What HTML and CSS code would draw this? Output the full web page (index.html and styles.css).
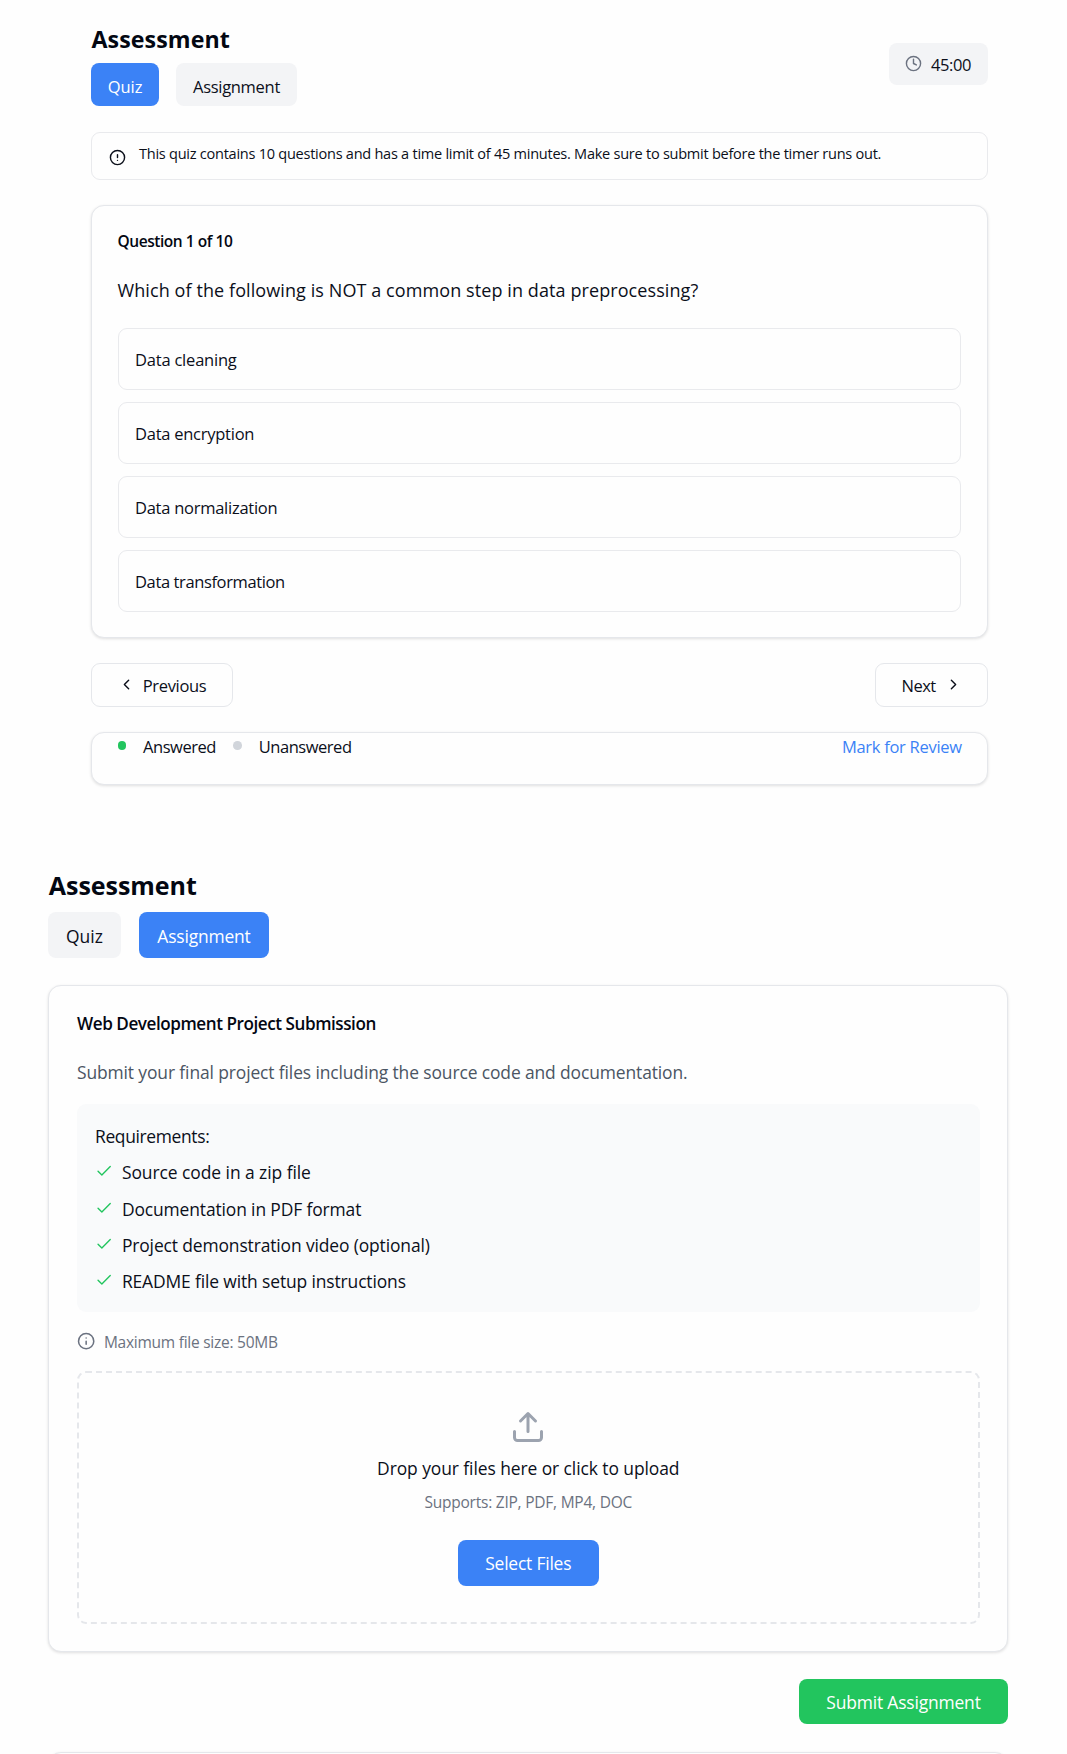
FILE: index.html
```html
<!DOCTYPE html>
<html lang="en">
<head>
<meta charset="utf-8">
<title>Assessment</title>
<link rel="stylesheet" href="styles.css">
</head>
<body>
<section class="quiz">
  <header class="quiz-header">
    <div>
      <h1 class="quiz-heading">Assessment</h1>
      <nav class="tabs">
        <button class="tab tab-quiz active">Quiz</button>
        <button class="tab tab-assignment">Assignment</button>
      </nav>
    </div>
    <div class="timer">
      <svg class="icon" viewBox="0 0 24 24"><circle cx="12" cy="12" r="10"/><path d="M12 6v6l4 2"/></svg>
      <span>45:00</span>
    </div>
  </header>

  <div class="alert">
    <svg class="icon" viewBox="0 0 24 24"><circle cx="12" cy="12" r="10"/><path d="M12 8v4M12 16h.01"/></svg>
    <p class="alert-text">This quiz contains 10 questions and has a time limit of 45 minutes. Make sure to submit before the timer runs out.</p>
  </div>

  <div class="card question-card">
    <h2 class="question-count">Question 1 of 10</h2>
    <p class="question">Which of the following is NOT a common step in data preprocessing?</p>
    <div class="options">
      <div class="option">Data cleaning</div>
      <div class="option">Data encryption</div>
      <div class="option">Data normalization</div>
      <div class="option">Data transformation</div>
    </div>
  </div>

  <div class="pager">
    <button class="pager-button previous">
      <svg class="icon" viewBox="0 0 24 24"><path d="m15 18-6-6 6-6"/></svg>
      <span>Previous</span>
    </button>
    <button class="pager-button next">
      <span>Next</span>
      <svg class="icon" viewBox="0 0 24 24"><path d="m9 18 6-6-6-6"/></svg>
    </button>
  </div>

  <div class="card status">
    <span class="dot answered"></span>
    <span class="status-label">Answered</span>
    <span class="dot"></span>
    <span class="status-label">Unanswered</span>
    <a class="review">Mark for Review</a>
  </div>
</section>

<section class="assignment">
  <h1 class="assignment-heading">Assessment</h1>
  <nav class="tabs">
    <button class="tab tab-quiz">Quiz</button>
    <button class="tab tab-assignment active">Assignment</button>
  </nav>

  <div class="card submission">
    <h2 class="submission-title">Web Development Project Submission</h2>
    <p class="description">Submit your final project files including the source code and documentation.</p>
    <div class="requirements">
      <p class="requirements-title">Requirements:</p>
      <ul class="requirement-list">
        <li><svg class="icon" viewBox="0 0 24 24"><path d="M20 6 9 17l-5-5"/></svg><span class="source">Source code in a zip file</span></li>
        <li><svg class="icon" viewBox="0 0 24 24"><path d="M20 6 9 17l-5-5"/></svg><span>Documentation in PDF format</span></li>
        <li><svg class="icon" viewBox="0 0 24 24"><path d="M20 6 9 17l-5-5"/></svg><span>Project demonstration video (optional)</span></li>
        <li><svg class="icon" viewBox="0 0 24 24"><path d="M20 6 9 17l-5-5"/></svg><span>README file with setup instructions</span></li>
      </ul>
    </div>
    <div class="size-note">
      <svg class="icon" viewBox="0 0 24 24"><circle cx="12" cy="12" r="10"/><path d="M12 16v-4M12 8h.01"/></svg>
      <span>Maximum file size: 50MB</span>
    </div>
    <div class="dropzone">
      <svg class="icon upload" viewBox="0 0 24 24"><path d="M21 15v4a2 2 0 0 1-2 2H5a2 2 0 0 1-2-2v-4M17 8l-5-5-5 5M12 3v12"/></svg>
      <p class="drop-text">Drop your files here or click to upload</p>
      <p class="supports">Supports: ZIP, PDF, MP4, DOC</p>
      <button class="select">Select Files</button>
    </div>
  </div>

  <div class="actions"><button class="submit">Submit Assignment</button></div>
  <div class="card following"></div>
</section>
</body>
</html>
```
FILE: styles.css
```css
* { box-sizing: border-box; margin: 0; padding: 0; }
html { overflow: hidden; }
body {
  height: 1754px;
  overflow: hidden;
  background: #fefefe;
  color: #0b0f1a;
  font-family: "Open Sans", "Noto Sans", sans-serif;
}
button { font: inherit; letter-spacing: inherit; color: inherit; border: 0; background: none; white-space: nowrap; }
p, span, a, h1, h2 { white-space: nowrap; }
ul { list-style: none; }
h1, h2 { color: #030712; }
.icon {
  flex: none;
  fill: none;
  stroke: currentColor;
  stroke-width: 2;
  stroke-linecap: round;
  stroke-linejoin: round;
}
.card {
  background: #fefefe;
  border: 1px solid #e5e7eb;
  border-radius: 13px;
  box-shadow: 0 1px 3px rgba(0, 0, 0, .12);
}
.tabs { display: flex; }
.tab { background: #f3f4f6; border-radius: 8px; padding-top: 3px; text-align: center; }
.tab.active { background: #3b82f6; color: #fff; }

/* Quiz */
.quiz {
  width: 896.5px;
  margin-left: 91px;
  padding-top: 23px;
  font-size: 16.5px;
  letter-spacing: -.3px;
  line-height: 24px;
}
.quiz .icon { width: 17px; height: 17px; }
.quiz-header { display: flex; justify-content: space-between; align-items: flex-start; }
.quiz-heading { padding-left: .5px; font-size: 23.2px; line-height: 32px; letter-spacing: .09px; font-weight: 700; }
.quiz .tabs { margin-top: 8.4px; gap: 17px; }
.quiz .tab { height: 43px; padding-top: 4px; }
.quiz .tab-quiz { width: 68px; letter-spacing: -.03px; }
.quiz .tab-assignment { width: 121px; }
.timer {
  display: flex;
  align-items: center;
  gap: 9px;
  width: 98.5px;
  height: 42px;
  margin-top: 20px;
  padding-left: 16px;
  background: #f3f4f6;
  border-radius: 8px;
  letter-spacing: -.4px;
}
.timer .icon { color: #6b7280; position: relative; top: -.8px; }
.timer span { padding-top: 1px; }
.alert {
  display: flex;
  height: 48px;
  margin-top: 25.6px;
  padding: 10px 17px;
  border: 1px solid #e9eaed;
  border-radius: 9px;
}
.alert .icon { margin-top: 6.4px; }
.alert-text { margin-left: 13px; font-size: 14.55px; line-height: 20px; letter-spacing: -.262px; }
.question-card { height: 432.7px; margin-top: 25px; padding: 23px 25.5px 0 25.5px; }
.question-count { font-size: 15.5px; line-height: 24px; font-weight: 600; letter-spacing: -.45px; }
.question { margin-top: 23px; font-size: 18px; line-height: 28px; letter-spacing: .09px; }
.options { display: grid; gap: 12.1px; margin-top: 24.5px; }
.option {
  display: flex;
  align-items: center;
  height: 61.8px;
  padding: 1.6px 0 0 16.5px;
  border: 1px solid #e9eaed;
  border-radius: 9px;
}
.option:nth-child(1) { letter-spacing: -.21px; }
.option:nth-child(2) { letter-spacing: -.25px; }
.option:nth-child(3) { letter-spacing: -.26px; }
.option:nth-child(4) { letter-spacing: -.38px; }
.pager { display: flex; justify-content: space-between; margin-top: 25.3px; }
.pager-button {
  display: flex;
  align-items: center;
  height: 43.7px;
  border: 1px solid #e5e7eb;
  border-radius: 9px;
}
.pager-button span { padding-top: 1.6px; }
.pager-button .icon { position: relative; top: -.5px; }
.previous { width: 142px; padding-left: 25.8px; gap: 8px; letter-spacing: -.35px; }
.next { width: 112.7px; padding-left: 25.8px; gap: 9px; letter-spacing: -.53px; }
.status { display: flex; height: 53px; margin-top: 25.3px; padding: 1.8px 24.7px 0 25.8px; }
.dot { width: 8.6px; height: 8.6px; margin-top: 6.5px; border-radius: 50%; background: #d1d5db; }
.dot.answered { background: #22c55e; }
.status-label { margin: 0 17.6px 0 16.7px; letter-spacing: -.47px; }
.review { margin-left: auto; color: #3b82f6; letter-spacing: -.28px; }

/* Assignment */
.assignment {
  width: 960px;
  margin: 82.2px 0 0 48px;
  font-size: 17.46px;
  line-height: 27px;
  letter-spacing: -.13px;
}
.assignment .icon { width: 18.3px; height: 18.3px; }
.assignment-heading { padding-left: .8px; font-size: 25px; line-height: 36px; letter-spacing: -.04px; font-weight: 700; }
.assignment .tabs { margin-top: 8.8px; gap: 18px; }
.assignment .tab { height: 45.7px; }
.assignment .tab-quiz { width: 73px; letter-spacing: .1px; }
.assignment .tab-assignment { width: 130px; letter-spacing: -.18px; }
.submission { height: 667px; margin-top: 27.3px; padding: 24px 27.5px 0 28px; }
.submission-title { font-size: 17.1px; line-height: 27px; font-weight: 600; letter-spacing: -.44px; }
.description { margin-top: 21.7px; color: #4b5563; letter-spacing: -.12px; }
.requirements {
  height: 207.7px;
  margin-top: 18.3px;
  padding: 19.2px 18px 0;
  border-radius: 9px;
  background: #f9fafb;
}
.requirements-title { letter-spacing: -.35px; }
.requirement-list { display: grid; gap: 9.3px; margin-top: 9.2px; }
.requirement-list li { display: flex; align-items: center; gap: 8.6px; }
.requirement-list .icon { color: #22c55e; stroke-width: 1.8; position: relative; top: -1.2px; }
.requirement-list .source { letter-spacing: -.06px; }
.size-note {
  display: flex;
  align-items: center;
  gap: 8.6px;
  height: 23px;
  margin-top: 19.6px;
  color: #6b7280;
  font-size: 15.5px;
  letter-spacing: -.25px;
}
.size-note .icon { position: relative; top: -1.6px; }
.dropzone {
  display: flex;
  flex-direction: column;
  align-items: center;
  height: 253px;
  margin-top: 16.7px;
  padding-top: 36px;
  border: 2px dashed #e5e7eb;
  border-radius: 9px;
}
.dropzone .upload { width: 36px; height: 36px; color: #9ca3af; }
.drop-text { margin-top: 9.9px; letter-spacing: -.08px; }
.supports { margin-top: 9.1px; font-size: 15.5px; line-height: 23px; letter-spacing: -.23px; color: #6b7280; }
.select { width: 141px; height: 45.9px; margin-top: 26px; padding-top: 2px; border-radius: 8px; background: #3b82f6; color: #fff; letter-spacing: -.21px; }
.actions { display: flex; justify-content: flex-end; margin-top: 27px; }
.submit { width: 209px; height: 45.3px; padding-top: 2px; border-radius: 8px; background: #22c55e; color: #fff; letter-spacing: -.17px; }
.following { height: 60px; margin-top: 27.7px; }
```
